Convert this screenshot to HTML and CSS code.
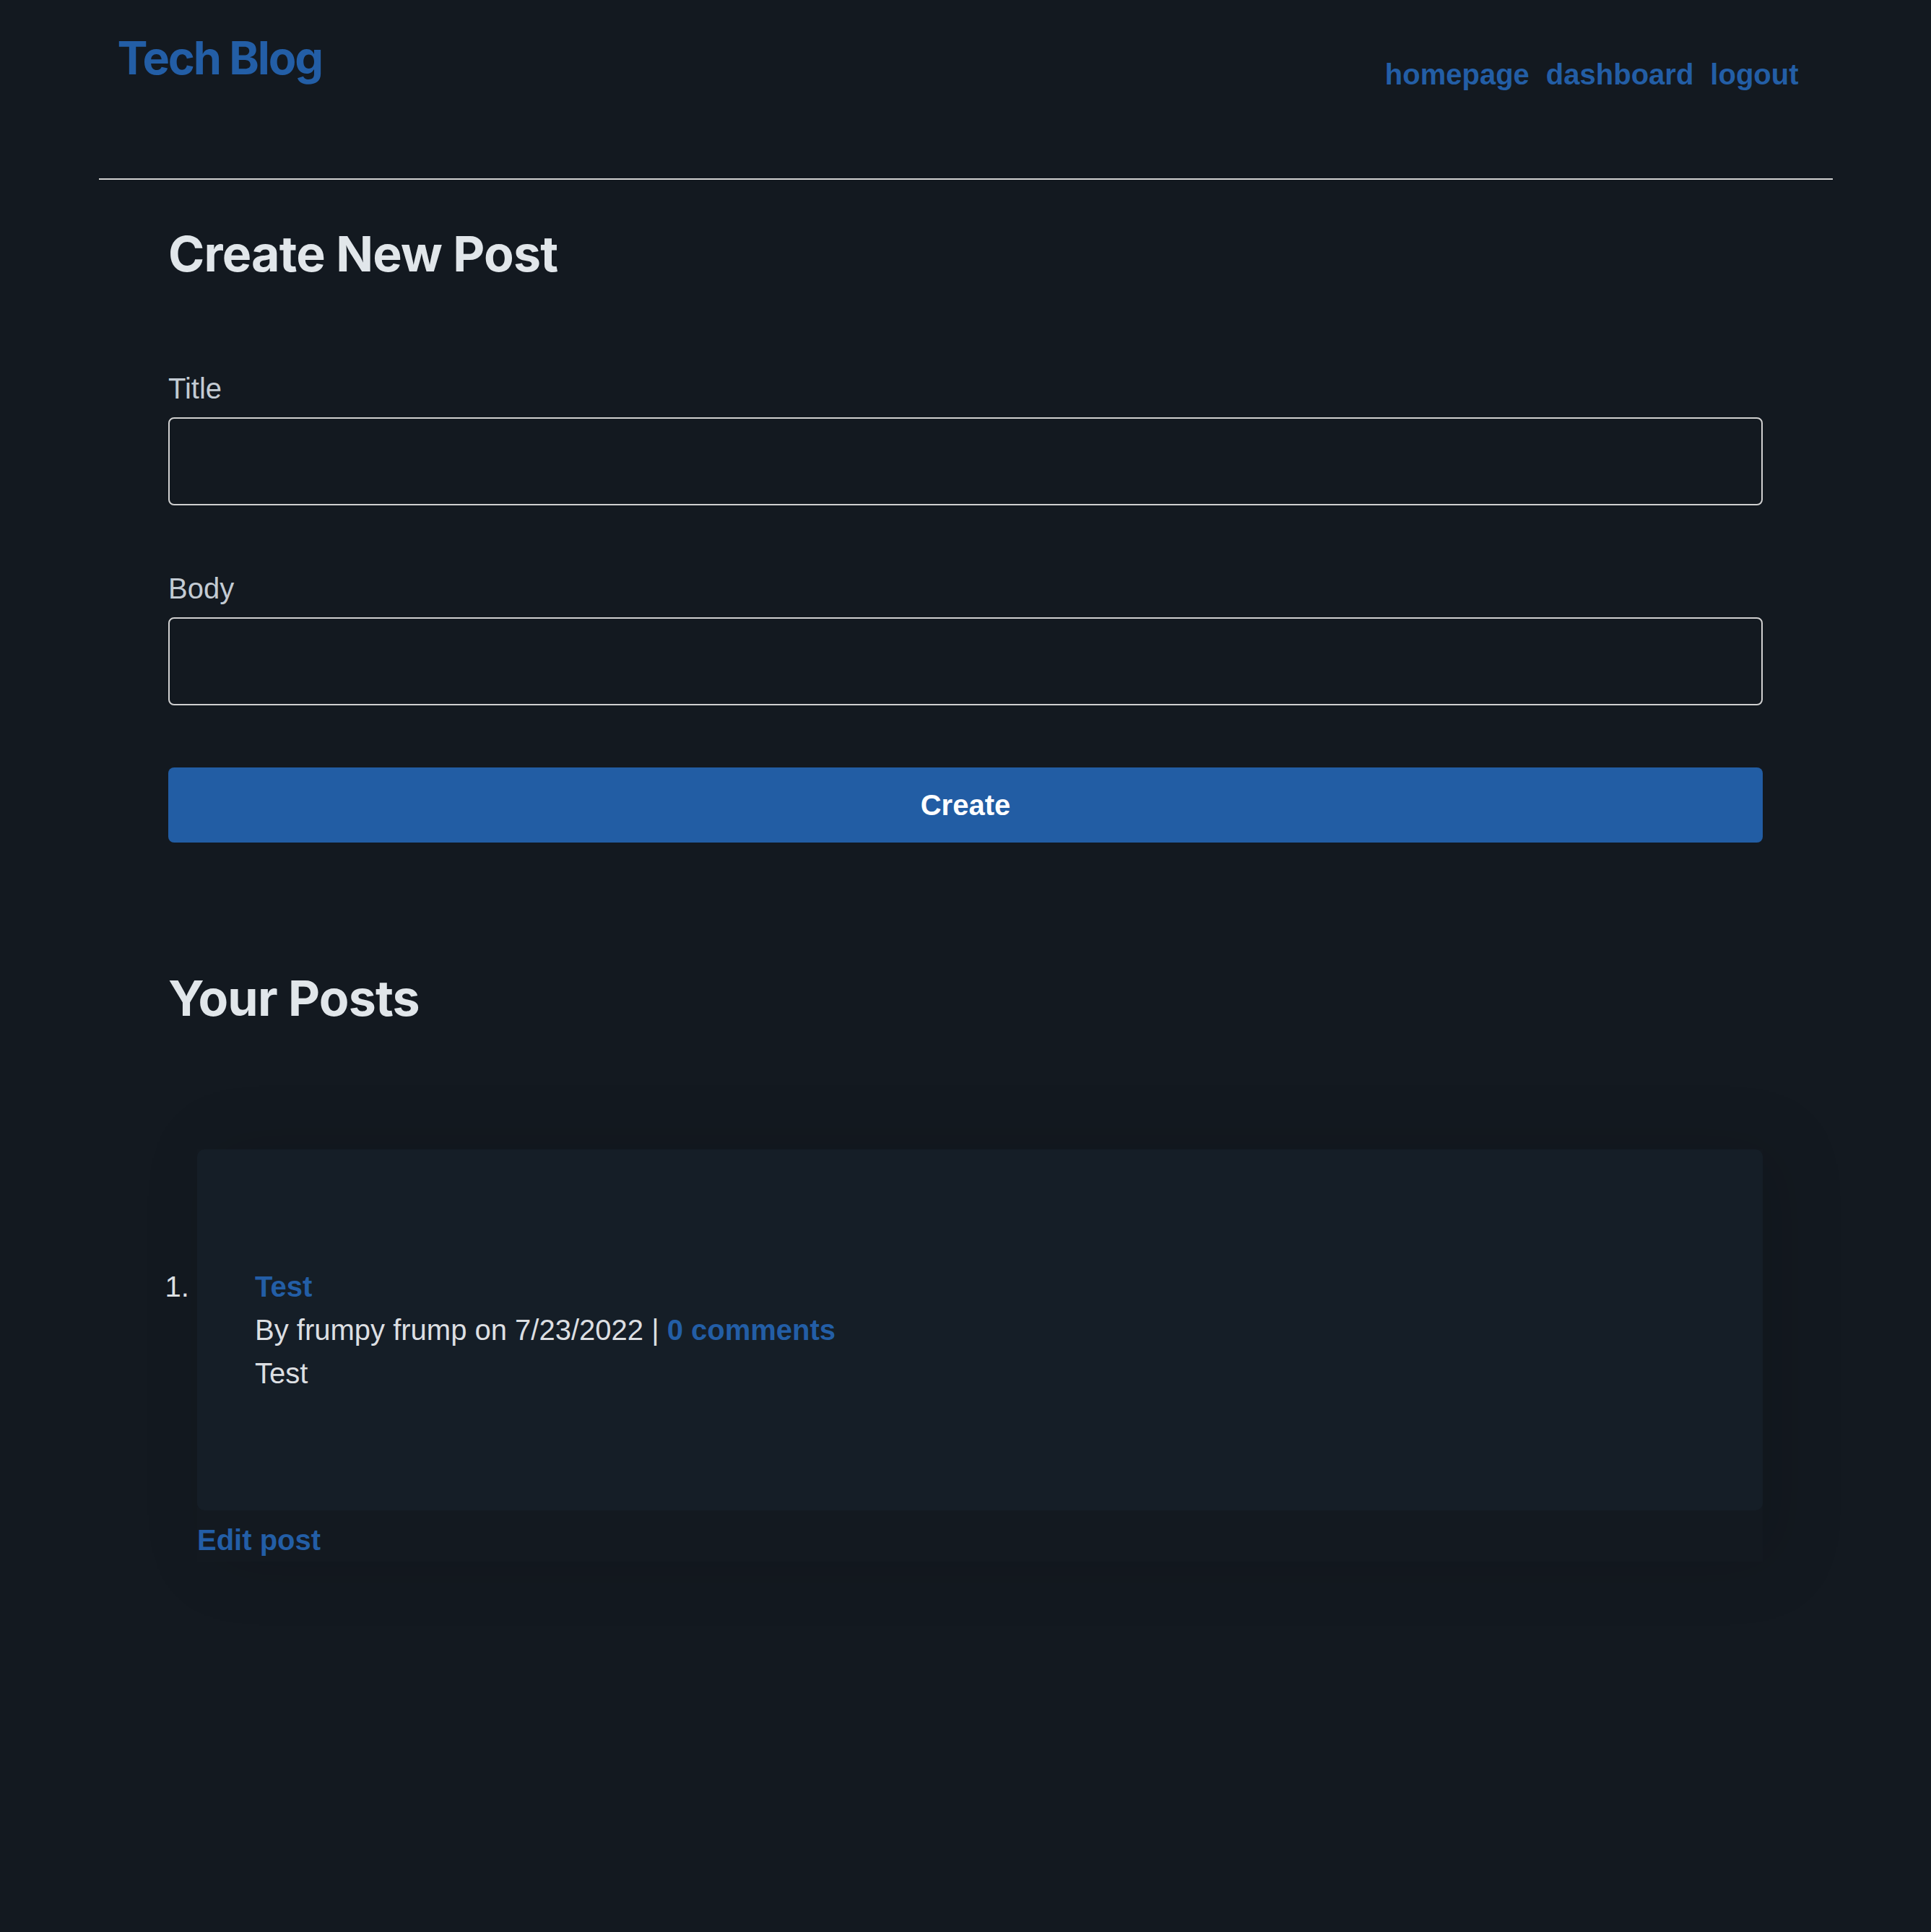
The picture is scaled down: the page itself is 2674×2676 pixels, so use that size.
FILE: index.html
```html
<!DOCTYPE html>
<html lang="en">
<head>
<meta charset="utf-8">
<title>Tech Blog</title>
<link rel="stylesheet" href="styles.css">
</head>
<body>
<header class="site-header">
  <div class="header-row">
    <a class="logo" href="#">Tech Blog</a>
    <nav class="nav">
      <a href="#">homepage</a>
      <a href="#">dashboard</a>
      <a href="#">logout</a>
    </nav>
  </div>
  <hr class="rule">
</header>
<main class="main">
  <h2 class="heading heading-first">Create New Post</h2>
  <form class="post-form">
    <label class="label" for="title">Title</label>
    <input class="field" id="title" type="text">
    <label class="label label-body" for="body">Body</label>
    <input class="field" id="body" type="text">
    <button class="btn" type="button">Create</button>
  </form>
  <h2 class="heading heading-posts">Your Posts</h2>
  <ol class="posts">
    <li class="post">
      <div class="card">
        <a class="post-title" href="#">Test</a>
        <div class="meta">By frumpy frump on 7/23/2022 | <a class="comments" href="#">0 comments</a></div>
        <div class="body">Test</div>
      </div>
      <a class="edit" href="#">Edit post</a>
    </li>
  </ol>
</main>
</body>
</html>
```
FILE: styles.css
```css
* { box-sizing: border-box; }
html, body { margin: 0; padding: 0; }
body {
  background: #131920;
  color: #dcdfe2;
  font-family: "Liberation Sans", Arial, sans-serif;
  font-size: 40px;
  line-height: 60px;
  min-height: 2676px;
}
a { text-decoration: none; color: #235ea6; font-weight: bold; }

.site-header {
  width: 2401px;
  margin: 0 auto;
}
.header-row {
  height: 247px;
  display: flex;
  justify-content: space-between;
  align-items: flex-start;
  padding: 40px 47px 0 26px;
}
.logo {
  font-family: Inter, "Liberation Sans", sans-serif;
  font-size: 63px;
  line-height: 80px;
  font-weight: 700;
  letter-spacing: -2.2px;
  color: #235ea6;
}
.nav {
  display: flex;
  gap: 23px;
  margin-top: 39px;
  font-size: 40px;
  line-height: 48px;
}
.rule {
  margin: 0;
  border: none;
  height: 2px;
  background: #d2d2d2;
}

.main {
  width: 2208px;
  margin: 0 auto;
}
.heading {
  font-family: Inter, "Liberation Sans", sans-serif;
  font-size: 68px;
  line-height: 82px;
  font-weight: 700;
  letter-spacing: -0.8px;
  color: #e1e6ea;
  margin: 0;
}
.heading-first { margin-top: 61px; }
.heading-posts { margin-top: 174px; }

.post-form { display: flex; flex-direction: column; }
.label {
  display: block;
  color: #c3cbd3;
  font-size: 40px;
  line-height: 48px;
  margin-top: 122px;
  margin-bottom: 16px;
}
.label-body { margin-top: 91px; }
.field {
  display: block;
  width: 100%;
  height: 122px;
  background: transparent;
  border: 2px solid #d0d0d0;
  border-radius: 8px;
  color: #dcdfe2;
  font-size: 40px;
  padding: 0 20px;
  margin: 0;
}
.btn {
  margin-top: 86px;
  height: 104px;
  width: 100%;
  border: none;
  border-radius: 8px;
  background: #225da4;
  color: #ffffff;
  font-family: "Liberation Sans", Arial, sans-serif;
  font-size: 40px;
  font-weight: bold;
}

.posts {
  margin: 169px 0 0 0;
  padding: 0 0 0 40px;
  color: #dcdfe2;
}
.post {
  box-shadow: 20px 0 90px 6px rgba(0, 0, 0, 0.11);
}
.card {
  background: #151e27;
  border-radius: 10px;
  padding: 160px 80px;
}
.post-title { display: block; }
.meta { color: #dcdfe2; }
.body { color: #dcdfe2; }
.edit {
  display: inline-block;
  margin-top: 11px;
}
```
